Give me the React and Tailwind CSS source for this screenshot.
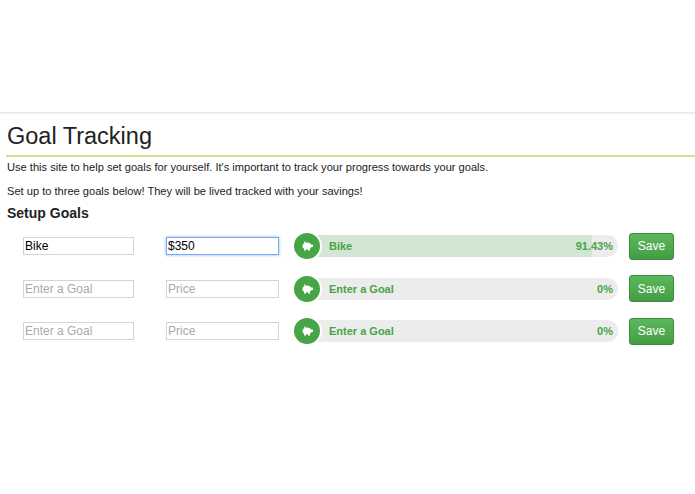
import React from 'react';

const rows = [
  { goal: 'Bike', price: '$350', label: 'Bike', pct: '91.43%', fill: 91.43, focus: true },
  { goal: '', price: '', label: 'Enter a Goal', pct: '0%', fill: 0 },
  { goal: '', price: '', label: 'Enter a Goal', pct: '0%', fill: 0 },
];

function Piggy() {
  return (
    <svg width="12" height="10" viewBox="0 0 12 10" fill="white">
      <ellipse cx="6" cy="5" rx="4.6" ry="3.6" />
      <rect x="3" y="7" width="1.8" height="2.6" />
      <rect x="7.2" y="7" width="1.8" height="2.6" />
      <rect x="10" y="3.6" width="2" height="2.4" />
      <path d="M3 2 L3.6 0 L5 1.6 Z" />
    </svg>
  );
}

function GoalRow({ row }) {
  return (
    <div className="flex items-center h-[42.5px]">
      <input
        readOnly
        value={row.goal}
        placeholder="Enter a Goal"
        className="ml-[23px] w-[111px] h-[18px] border border-[#d4d4d4] px-[1px] text-[12px] text-black placeholder:text-[#aaa] outline-none"
      />
      <input
        readOnly
        value={row.price}
        placeholder="Price"
        className={`ml-[32px] w-[113px] h-[18px] px-[1px] text-[12px] text-black placeholder:text-[#aaa] outline-none ${row.focus ? 'border border-[#7aaaf0] shadow-[0_0_3px_#8cb8f5]' : 'border border-[#d4d4d4]'}`}
      />
      <div className="ml-[15px] relative flex items-center w-[324px] h-[26px]">
        <div className="absolute left-[19px] right-0 top-[2px] h-[22px] rounded-r-full bg-[#ececec] overflow-hidden">
          <div className="h-full bg-[#d3e6d4]" style={{ width: `${row.fill}%` }} />
        </div>
        <div className="relative z-10 w-[26px] h-[26px] rounded-full bg-[#46a546] border-2 border-white box-content -ml-[2px] flex items-center justify-center">
          <Piggy />
        </div>
        <span className="relative z-10 ml-[7px] text-[11px] font-bold text-[#46a546]">{row.label}</span>
        <span className="relative z-10 ml-auto mr-[5px] text-[11px] font-bold text-[#46a546]">{row.pct}</span>
      </div>
      <button className="ml-[11px] w-[45px] h-[27px] rounded-[3px] border border-[#3b8d3b] bg-gradient-to-b from-[#5cb85c] to-[#449d44] text-white text-[12px]">
        Save
      </button>
    </div>
  );
}

export default function App() {
  return (
    <div className="w-[695px] h-[494px] bg-white" style={{ fontFamily: '"Liberation Sans", Arial, sans-serif' }}>
      <div className="h-[113px] border-b border-[#e6e6e6] shadow-[0_1px_2px_#eee]" />
      <h1 className="ml-[7px] mt-[8px] text-[23.5px] leading-[30px] text-[#222]">Goal Tracking</h1>
      <div className="ml-[6px] mt-[4px] h-[2px] bg-[#d4e08a]" />
      <p className="ml-[7px] mt-[2px] text-[11.1px] leading-[16px] text-[#222]">
        Use this site to help set goals for yourself. It's important to track your progress towards your goals.
      </p>
      <p className="ml-[7px] mt-[8px] text-[11.1px] leading-[16px] text-[#222]">
        Set up to three goals below! They will be lived tracked with your savings!
      </p>
      <h2 className="ml-[7px] mt-[5px] text-[14px] leading-[18px] font-bold text-[#222]">Setup Goals</h2>
      <div className="mt-[3px]">
        {rows.map((r, i) => (
          <GoalRow key={i} row={r} />
        ))}
      </div>
    </div>
  );
}
